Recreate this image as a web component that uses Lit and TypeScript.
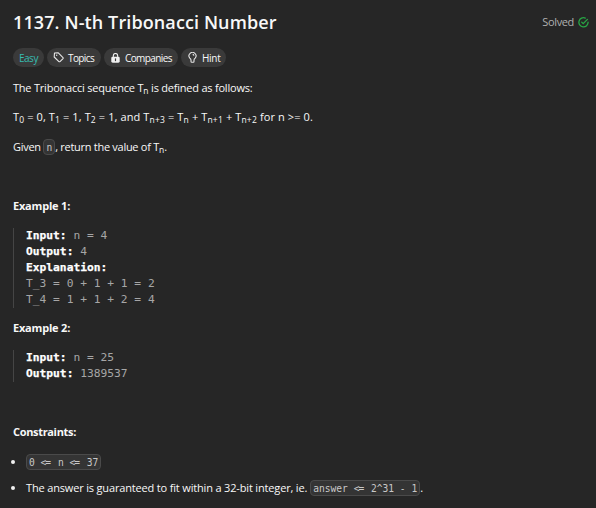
import { LitElement, html, css } from "lit";
import { customElement } from "lit/decorators.js";

@customElement("app-root")
export class AppRoot extends LitElement {
  static styles = css`
    :host {
      display: block;
      box-sizing: border-box;
      width: 596px;
      height: 508px;
      overflow: hidden;
      padding: 9px 7px 0 13px;
      background: #262626;
      color: #f8f8f8;
      font: 11px/16px "Open Sans", "Noto Sans", sans-serif;
      letter-spacing: -0.22px;
      white-space: nowrap;
    }
    header { display: flex; justify-content: space-between; align-items: center; height: 26px; }
    h1 { margin: 0; font-size: 18px; line-height: 26px; font-weight: 600; letter-spacing: 0.11px; }
    .solved { display: flex; align-items: center; gap: 4px; color: #b0b0b0; letter-spacing: -0.35px; }
    .tags { display: flex; gap: 3px; margin-top: 13px; }
    .tag {
      display: flex; align-items: center; box-sizing: border-box; height: 19px;
      border-radius: 10px; background: #3a3a3a; font-size: 10px; padding-left: 6px; gap: 4px;
    }
    .easy { color: #36bdb2; width: 31px; letter-spacing: -0.5px; }
    .topics { width: 54px; letter-spacing: -0.6px; }
    .topics span { letter-spacing: -0.6px; }
    .companies { width: 74px; padding-left: 7px; gap: 5px; letter-spacing: -0.6px; }
    .hint { width: 45px; padding-left: 7px; gap: 5px; letter-spacing: -0.3px; }
    svg { display: block; flex: none; }
    p { margin: 0; height: 16px; }
    .intro { margin-top: 13px; }
    .terms { margin-top: 13px; letter-spacing: 0.1px; }
    .terms sub { letter-spacing: 0.2px; }
    .given { margin-top: 14px; letter-spacing: -0.28px; }
    sub { font-size: 8.5px; line-height: 0; vertical-align: -2px; letter-spacing: 0; }
    .label { font-weight: 700; font-size: 11px; letter-spacing: -0.2px; }
    .one { margin-top: 43px; }
    .two { margin-top: 12px; }
    .limits { margin-top: 42px; letter-spacing: -0.33px; }
    pre {
      margin: 14px 0 0; padding-left: 12px; border-left: 1px solid #454545;
      font: 11.26px/16px "DejaVu Sans Mono", monospace; letter-spacing: 0; color: #a6a6a6;
    }
    pre b { color: #fff; -webkit-text-stroke: 0.25px #fff; }
    code {
      display: inline-block; box-sizing: border-box; height: 16px; padding: 1px 2px 0;
      border: 1px solid #4a4a4a; border-radius: 4px; background: #343434; color: #c8c8c8;
      font: 9.6px/14px "DejaVu Sans Mono", monospace; letter-spacing: 0;
    }
    .given code { vertical-align: top; }
    .op { letter-spacing: -1px; margin-right: 2px; }
    ul { list-style: none; margin: 14px 0 0; padding: 0; display: grid; gap: 10px; letter-spacing: -0.165px; }
    li { display: flex; align-items: center; height: 16px; }
    li::before { content: ""; width: 4px; height: 4px; border-radius: 2px; background: #f0f0f0; margin: 0 11px 0 -2px; }
    li code { flex: none; }
    .gap { margin-left: 3px; }
  `;

  render() {
    return html`
      <header>
        <h1>1137. N-th Tribonacci Number</h1>
        <div class="solved"><span>Solved</span>
          <svg width="11" height="11" viewBox="0 0 11 11" fill="none" stroke="#28a745" stroke-width="1.3" stroke-linecap="round">
            <path d="M7.3 1.1A4.6 4.6 0 1 0 10.1 5.2M3.7 5.1 5.2 6.6 9.4 2.4" />
          </svg>
        </div>
      </header>
      <div class="tags">
        <div class="tag easy"><span>Easy</span></div>
        <div class="tag topics">
          <svg width="11" height="11" viewBox="0 0 11 11" fill="none" stroke="#e6e6e6" stroke-width="1.1" stroke-linejoin="round">
            <path d="M1.5 1 5.3 .8 10 5.6Q10.4 6.1 10 6.6L7 9.6Q6.4 10 5.9 9.6L1.2 5Z" />
            <circle cx="3.7" cy="3.3" r=".7" fill="#e6e6e6" stroke="none" />
          </svg><span>Topics</span>
        </div>
        <div class="tag companies">
          <svg width="9" height="10" viewBox="0 0 9 10">
            <path d="M2.3 4V2.7a2.2 2.2 0 0 1 4.4 0V4" fill="none" stroke="#f0f0f0" stroke-width="1.1" />
            <rect x=".3" y="3.7" width="8.4" height="6" rx="1.4" fill="#f0f0f0" />
            <path d="M4.5 5.8v1.8" stroke="#3a3a3a" stroke-width="1.2" stroke-linecap="round" />
          </svg><span>Companies</span>
        </div>
        <div class="tag hint">
          <svg width="9" height="11" viewBox="0 0 9 11" fill="none" stroke="#e6e6e6" stroke-width="1.1">
            <path d="M3 8Q2.9 7 1.8 6.1A3.5 3.5 0 1 1 7.2 6.1Q6.1 7 6 8V9.6Q6 10.3 5.3 10.3H3.7Q3 10.3 3 9.6ZM4.7 2.4Q5.7 2.6 5.9 3.6" />
          </svg><span>Hint</span>
        </div>
      </div>
      <p class="intro">The Tribonacci sequence T<sub>n</sub> is defined as follows:</p>
      <p class="terms">T<sub>0</sub> = 0, T<sub>1</sub> = 1, T<sub>2</sub> = 1, and T<sub>n+3</sub> = T<sub>n</sub> + T<sub>n+1</sub> + T<sub>n+2</sub> for n &gt;= 0.</p>
      <p class="given">Given <code>n</code>, return the value of T<sub>n</sub>.</p>
      <p class="label one">Example 1:</p>
      <pre><b>Input:</b> n = 4
<b>Output:</b> 4
<b>Explanation:</b>
T_3 = 0 + 1 + 1 = 2
T_4 = 1 + 1 + 2 = 4</pre>
      <p class="label two">Example 2:</p>
      <pre><b>Input:</b> n = 25
<b>Output:</b> 1389537</pre>
      <p class="label limits">Constraints:</p>
      <ul>
        <li><code>0 <span class="op">&lt;=</span> n <span class="op">&lt;=</span> 37</code></li>
        <li><span>The answer is guaranteed to fit within a 32-bit integer, ie.</span><code class="gap">answer <span class="op">&lt;=</span> 2^31 - 1</code>.</li>
      </ul>
    `;
  }
}
